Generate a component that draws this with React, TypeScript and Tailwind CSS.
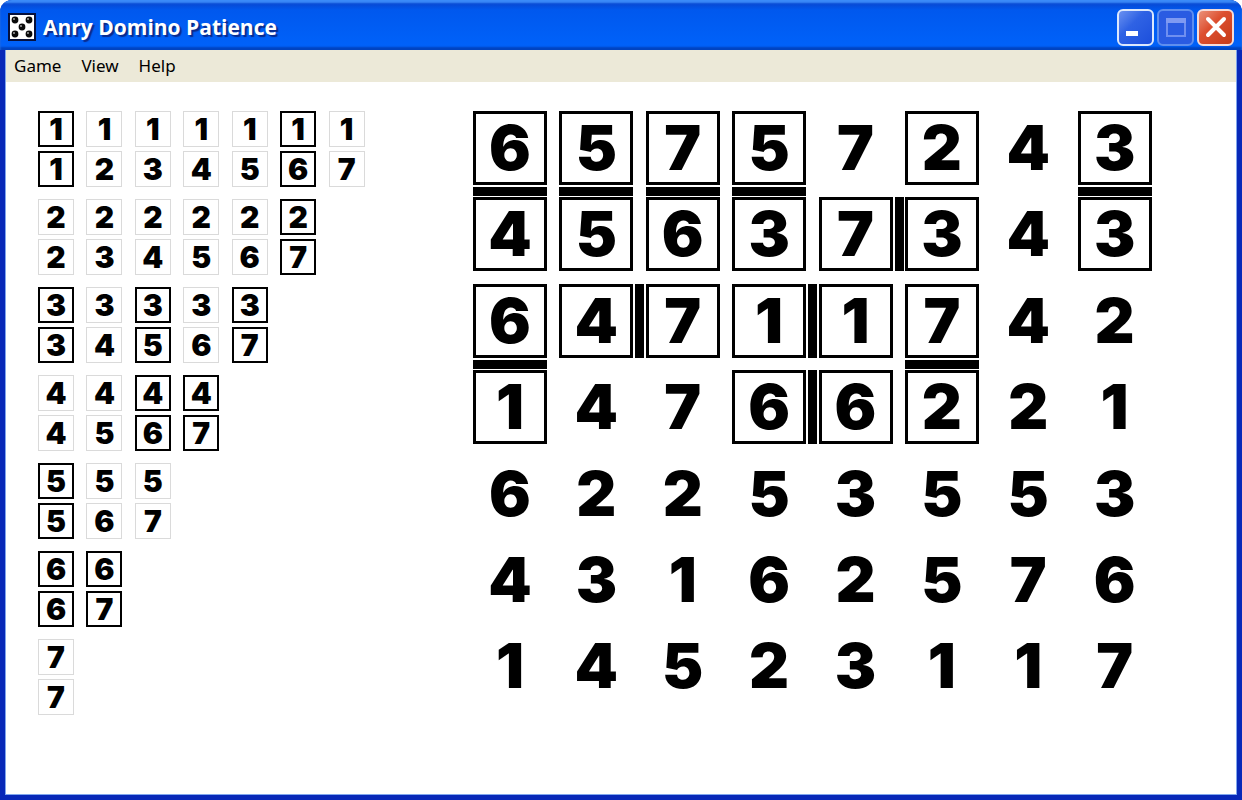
import clsx from "clsx";

type Cell = { value: number; placed?: boolean; link?: "down" | "right" };

// d = placed and joined to the cell below, r = placed and joined to the cell on the right, x = placed, . = free
const layout = [
  "6d 5d 7d 5d 7. 2x 4. 3d",
  "4x 5x 6x 3x 7r 3x 4. 3x",
  "6d 4r 7x 1r 1x 7d 4. 2.",
  "1x 4. 7. 6r 6x 2x 2. 1.",
  "6. 2. 2. 5. 3. 5. 5. 3.",
  "4. 3. 1. 6. 2. 5. 7. 6.",
  "1. 4. 5. 2. 3. 1. 1. 7.",
];

const board: Cell[] = layout.flatMap((row) =>
  row.split(" ").map((code) => ({
    value: Number(code[0]),
    placed: code[1] !== ".",
    link: code[1] === "d" ? "down" : code[1] === "r" ? "right" : undefined,
  }))
);

const used = ["11", "16", "27", "33", "35", "37", "46", "47", "55", "66", "67"];
const numbers = [1, 2, 3, 4, 5, 6, 7];
const menus = ["Game", "View", "Help"];

function DiceIcon() {
  const pips = [[7, 7], [21, 7], [14, 14], [7, 21], [21, 21]];
  return (
    <svg className="size-7 shrink-0" viewBox="0 0 28 28" aria-hidden="true">
      <rect x="1" y="1" width="26" height="26" fill="#fff" stroke="#06103c" strokeWidth="2" />
      {pips.map(([x, y]) => (
        <g key={`${x}-${y}`}>
          <circle cx={x} cy={y} r="3.4" fill="#0a0a0a" />
          <circle cx={x - 1} cy={y - 1} r="1" fill="#a5a5a5" />
        </g>
      ))}
    </svg>
  );
}

function TitleBar() {
  const button = "flex size-[37px] items-center justify-center rounded-md border-2";
  return (
    <header className="flex h-[50px] items-center bg-linear-to-b from-[#0a3fc4] via-[#0058ee] via-20% to-[#0063fb] pt-1 pr-2 pl-2 shadow-[inset_0_3px_2px_#3b8bf8,inset_0_-3px_2px_#0043c0]">
      <DiceIcon />
      <h1 className="ml-[7px] flex-1 font-['Open_Sans','Noto_Sans',sans-serif] text-[21px] leading-7 font-bold text-white [text-shadow:2px_2px_1px_#0a2a8c]">
        Anry Domino Patience
      </h1>
      <div className="flex gap-[3px]">
        <button type="button" aria-label="Minimize" className={clsx(button, "border-[#dce8fc] bg-linear-to-br from-[#6a90f0] via-[#2f62e4] via-40% to-[#1c4fdc]")}>
          <svg className="size-6" viewBox="0 0 24 24"><rect x="2" y="16" width="12" height="5" fill="#fff" /></svg>
        </button>
        <button type="button" aria-label="Maximize" disabled className={clsx(button, "border-[#5f8eee] bg-[#2a5be2]")}>
          <svg className="size-6" viewBox="0 0 24 24">
            <rect x="3" y="4" width="18" height="17" fill="none" stroke="#6f8ff0" strokeWidth="2" />
            <rect x="2" y="3" width="20" height="5" fill="#7f9af2" />
          </svg>
        </button>
        <button type="button" aria-label="Close" className={clsx(button, "border-[#f6dcd8] bg-linear-to-br from-[#ea9078] via-[#dd5030] via-40% to-[#c63a18]")}>
          <svg className="size-6" viewBox="0 0 24 24">
            <path d="M4 4 20 20M20 4 4 20" stroke="#fff" strokeWidth="4" strokeLinecap="round" fill="none" />
          </svg>
        </button>
      </div>
    </header>
  );
}

function SmallTile({ value, active }: { value: number; active: boolean }) {
  return (
    <div className={clsx("flex size-9 items-center justify-center text-[30px] leading-none", active ? "border-2 border-black" : "border border-[#dadada]")}>
      {value}
    </div>
  );
}

function DominoSet() {
  return (
    <section aria-label="Dominoes" className="flex w-[339px] flex-col gap-3">
      {numbers.map((top) => (
        <div key={top} className="grid grid-cols-7">
          {numbers.slice(top - 1).map((bottom) => {
            const active = used.includes(`${top}${bottom}`);
            return (
              <div key={bottom} className="flex flex-col gap-1">
                <SmallTile value={top} active={active} />
                <SmallTile value={bottom} active={active} />
              </div>
            );
          })}
        </div>
      ))}
    </section>
  );
}

function Board() {
  return (
    <section aria-label="Board" className="grid w-[691px] grid-cols-8">
      {board.map(({ value, placed, link }, i) => (
        <div key={i} className="relative aspect-square">
          <div className={clsx("flex size-[74px] items-center justify-center text-[62px] leading-none", placed && "border-3 border-black")}>
            {value}
          </div>
          {link === "down" && <div className="absolute top-[76px] left-0 h-[9px] w-[74px] bg-black" />}
          {link === "right" && <div className="absolute top-0 left-[76px] h-[74px] w-[9px] bg-black" />}
        </div>
      ))}
    </section>
  );
}

export default function App() {
  return (
    <div className="flex min-h-screen flex-col overflow-hidden rounded-t-xl bg-[#0a2fc0]">
      <TitleBar />
      <div className="flex flex-1 flex-col border-x-[5px] border-b-[5px] border-[#0828b8] bg-[#7fa6ee] px-px pb-px">
        <nav className="flex h-8 items-center gap-5 bg-[#ece9d8] pl-2 font-['Noto_Sans',sans-serif] text-[17px] leading-6 text-black">
          {menus.map((menu) => (
            <button key={menu} type="button">{menu}</button>
          ))}
        </nav>
        <main className="flex flex-1 items-start gap-24 bg-white px-8 pt-[29px] font-['Inter',sans-serif] font-black text-black">
          <DominoSet />
          <Board />
        </main>
      </div>
    </div>
  );
}
